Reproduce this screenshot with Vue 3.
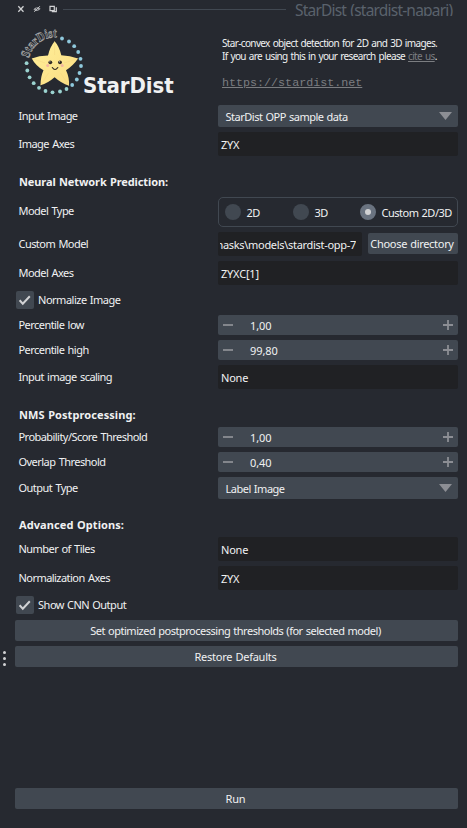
<script setup>
import { reactive } from 'vue'

const rows = reactive([
  { kind: 'combo', label: 'Input Image', value: 'StarDist OPP sample data' },
  { kind: 'text', label: 'Image Axes', value: 'ZYX' },
  { kind: 'heading', label: 'Neural Network Prediction:', tall: true },
  { kind: 'radio', label: 'Model Type', options: ['2D', '3D', 'Custom 2D/3D'], value: 'Custom 2D/3D' },
  { kind: 'file', label: 'Custom Model', value: 'masks\\models\\stardist-opp-7' },
  { kind: 'text', label: 'Model Axes', value: 'ZYXC[1]' },
  { kind: 'check', label: 'Normalize Image' },
  { kind: 'spin', label: 'Percentile low', value: '1,00' },
  { kind: 'spin', label: 'Percentile high', value: '99,80' },
  { kind: 'text', label: 'Input image scaling', value: 'None' },
  { kind: 'heading', label: 'NMS Postprocessing:' },
  { kind: 'spin', label: 'Probability/Score Threshold', value: '1,00' },
  { kind: 'spin', label: 'Overlap Threshold', value: '0,40' },
  { kind: 'combo', label: 'Output Type', value: 'Label Image' },
  { kind: 'heading', label: 'Advanced Options:' },
  { kind: 'text', label: 'Number of Tiles', value: 'None' },
  { kind: 'text', label: 'Normalization Axes', value: 'ZYX' },
  { kind: 'check', label: 'Show CNN Output' },
  { kind: 'button', label: 'Set optimized postprocessing thresholds (for selected model)' },
  { kind: 'button', label: 'Restore Defaults' },
])

const dots = [
  [62, 38.5], [69, 41.5], [74.2, 46.2], [78.2, 52], [80.5, 58.8], [81, 66], [79.5, 73],
  [76.8, 79.5], [72.2, 85], [66.5, 89], [60, 91.5], [52.5, 92.3], [45.5, 91], [39, 87.8],
  [33.7, 83.2], [29.6, 77.3], [27.3, 70.5], [26.6, 63.2],
]
</script>

<template>
  <div class="dock">
    <header class="titlebar">
      <svg class="tools" width="60" height="18" viewBox="0 0 60 18">
        <path d="M18.3 6.3l5.2 5.4M23.5 6.3l-5.2 5.4" stroke="#d1d2d4" stroke-width="1.3" fill="none" />
        <path d="M33.5 9.4c1.8-2.7 5.2-2.7 7-.6c-1.8 2.7-5.2 2.7-7 .6z" fill="#9d9fa3" />
        <circle cx="37" cy="9" r="1" fill="#3a3d44" />
        <path d="M34.3 11.8l5.6-5.6" stroke="#c5c6c8" stroke-width="1" />
        <path d="M50 6.300h4.300v4.300h-4.300zM51.800 11.700h4.500v-4.400" stroke="#d1d2d4" stroke-width="1.2" fill="none" />
      </svg>
      <span class="rule"></span>
      <span class="title">StarDist (stardist-napari)</span>
    </header>

    <section class="intro">
      <svg class="logo" width="66" height="72" viewBox="18 26 66 72">
        <defs>
          <path id="arc" d="M28.8 58.2A27.500 27.500 0 0 1 62 38" />
          <linearGradient id="skin" x1="0" y1="0" x2="1" y2="1">
            <stop offset="0" stop-color="#fff09a" />
            <stop offset="1" stop-color="#fbdc82" />
          </linearGradient>
        </defs>
        <text class="arc-text"><textPath href="#arc" textLength="37.500" lengthAdjust="spacingAndGlyphs">StarDist</textPath></text>
        <circle v-for="(d, i) in dots" :key="i" :cx="d[0]" :cy="d[1]" r="1.9" :fill="i < 9 ? '#8fc9dd' : '#9bd3d0'" />
        <path d="M54.6 41.3Q59 46 61.3 55.2Q70 55.3 78 58.6Q73.500 65.5 66 70.3Q69.500 77.500 69 85.700Q61 83 54.600 77.200Q48 83 40.500 85.300Q40.500 77 43.500 70.300Q35.500 65.500 31.800 58.400Q39 55.500 48 55.400Q50 47 54.600 41.300Z" fill="url(#skin)" />
        <path d="M54.600 41.300L54.600 55M78 58.600L64 63M69 85.700L60.500 73M40.500 85.300L48.500 73M31.800 58.400L45 63" stroke="#f3cf7c" stroke-width=".5" opacity=".6" />
        <circle cx="50.300" cy="62.300" r="1.900" fill="#2e2722" />
        <circle cx="60" cy="62.300" r="1.900" fill="#2e2722" />
        <circle cx="49.900" cy="61.700" r=".5" fill="#fff" />
        <circle cx="59.600" cy="61.700" r=".5" fill="#fff" />
        <circle cx="47.700" cy="65.500" r="1.500" fill="#f3b5a0" />
        <circle cx="62.200" cy="65.500" r="1.500" fill="#f3b5a0" />
        <path d="M52.300 67.500Q55 71.500 57.800 67.500" fill="none" stroke="#2e2722" stroke-width="1.100" stroke-linecap="round" />
      </svg>
      <h1>StarDist</h1>
      <div class="about">
        <p>Star-convex object detection for 2D and 3D images.</p>
        <p>If you are using this in your research please <a>cite us</a>.</p>
        <p class="site"><a>https://stardist.net</a></p>
      </div>
    </section>

    <main class="form">
      <div v-for="row in rows" :key="row.label" class="row" :class="[row.kind, { tall: row.tall }]">
        <button v-if="row.kind === 'button'" class="btn">{{ row.label }}</button>
        <h2 v-else-if="row.kind === 'heading'">{{ row.label }}</h2>
        <template v-else-if="row.kind === 'check'">
          <svg class="box" width="18" height="18" viewBox="0 0 18 18">
            <path d="M3.600 9.300l3.200 3.400l7-7.400" fill="none" stroke="#d1d2d4" stroke-width="2" />
          </svg>
          <span class="check-label">{{ row.label }}</span>
        </template>
        <template v-else>
          <label>{{ row.label }}</label>
          <div v-if="row.kind === 'combo'" class="field">
            <span>{{ row.value }}</span>
            <svg width="13" height="8" viewBox="0 0 13 8"><path d="M0 0h13L6.500 8z" fill="#8c8e94" /></svg>
          </div>
          <div v-else-if="row.kind === 'text'" class="field"><span>{{ row.value }}</span></div>
          <div v-else-if="row.kind === 'spin'" class="field">
            <svg width="10" height="10" viewBox="0 0 10 10"><path d="M0 5h10" stroke="#8c8e94" stroke-width="1.800" /></svg>
            <span>{{ row.value }}</span>
            <svg width="10" height="10" viewBox="0 0 10 10"><path d="M0 5h10M5 0v10" stroke="#8c8e94" stroke-width="1.800" /></svg>
          </div>
          <div v-else-if="row.kind === 'radio'" class="field">
            <div v-for="o in row.options" :key="o" class="option" :class="{ on: o === row.value }">
              <i></i><span>{{ o }}</span>
            </div>
          </div>
          <template v-else>
            <div class="field path"><div class="clip"><span>{{ row.value }}</span></div></div>
            <button class="btn choose">Choose directory</button>
          </template>
        </template>
      </div>
    </main>

    <footer><button class="btn">Run</button></footer>
    <div class="grip"><i></i><i></i><i></i></div>
  </div>
</template>

<style>
body {
  margin: 0;
  background: #262930;
}
</style>

<style scoped>
.dock {
  position: relative;
  display: flex;
  flex-direction: column;
  box-sizing: border-box;
  width: 467px;
  height: 828px;
  overflow: hidden;
  background: #262930;
  color: #f0f1f2;
  font: 11px 'Noto Sans', sans-serif;
  letter-spacing: -0.48px;
  word-spacing: 0.6px;
  white-space: nowrap;
}
.titlebar {
  display: flex;
  height: 16px;
  overflow: hidden;
}
.rule {
  width: 223px;
  height: 1px;
  margin: 9px 9px 0 3px;
  background: #414851;
}
.title {
  color: #5a626c;
  font-size: 15.5px;
  line-height: 21px;
  letter-spacing: -0.8px;
  word-spacing: 1px;
}
.intro {
  display: flex;
  height: 89px;
}
.logo {
  margin: 10px 0 0 18px;
}
.arc-text {
  font: bold 13px 'Liberation Serif', serif;
  letter-spacing: 0;
  fill: #262930;
  stroke: #a5a6a7;
  stroke-width: 0.7px;
}
h1 {
  width: 139px;
  margin: 55px 0 0 -1px;
  font: bold 22px/30px 'DejaVu Sans Condensed', 'DejaVu Sans', sans-serif;
  font-stretch: condensed;
  letter-spacing: -0.1px;
}
.about {
  padding-top: 21px;
  letter-spacing: -0.65px;
  word-spacing: 1px;
}
.about p {
  margin: 0;
  font-size: 10px;
  line-height: 13px;
}
.about a {
  color: #7b7d81;
  text-decoration: underline;
}
.about .site {
  margin-top: 14px;
  font-family: 'Liberation Mono', monospace;
  font-size: 11.7px;
  letter-spacing: 0;
}
.form {
  display: flex;
  flex-direction: column;
  gap: 5px;
  padding: 0 9px 0 15px;
}
.row {
  display: flex;
  height: 24px;
  line-height: 24px;
}
label {
  width: 199.5px;
  padding-left: 3.5px;
  letter-spacing: -0.55px;
  word-spacing: 1px;
}
.field {
  display: flex;
  box-sizing: border-box;
  width: 240px;
  border-radius: 2px;
  background: #414851;
}
.field span {
  padding-top: 1px;
}
.text .field,
.field.path {
  padding-left: 3px;
  background: #202124;
  letter-spacing: -0.2px;
}
.row.combo {
  height: 22px;
  line-height: 22px;
}
.combo .field {
  justify-content: space-between;
  padding: 0 6px 0 7.5px;
}
.combo svg {
  margin-top: 7px;
}
.row.spin {
  height: 20px;
  line-height: 20px;
}
.spin .field {
  padding: 0 5px;
  letter-spacing: -0.1px;
}
.spin .field span {
  flex: 1;
  padding-left: 17px;
}
.spin svg {
  margin-top: 5px;
}
.row.heading {
  height: 28px;
  align-items: flex-end;
}
.row.heading.tall {
  height: 31px;
}
h2 {
  margin: 0 0 -5px 4px;
  font-size: 11px;
  font-weight: bold;
  line-height: 24px;
  letter-spacing: 0.08px;
}
.tall h2 {
  margin-bottom: -2px;
  letter-spacing: -0.1px;
}
.row.radio {
  height: 30px;
  line-height: 28px;
}
.radio .field {
  padding-left: 6px;
  border: 1px solid #414851;
  border-radius: 5px;
  background: none;
}
.option {
  display: flex;
  flex: none;
  width: 68px;
}
.option:nth-child(2) {
  width: 67px;
}
.option i {
  flex: none;
  box-sizing: border-box;
  width: 16px;
  height: 16px;
  margin: 6px 5.5px 0 0;
  border-radius: 50%;
  background: #414851;
}
.option.on i {
  border: 5px solid #6a7380;
  background: #d1d2d4;
}
.field.path {
  width: 144px;
  padding: 0 6px 0 2px;
  letter-spacing: -0.3px;
}
.clip {
  display: flex;
  flex: 1;
  min-width: 0;
  justify-content: flex-end;
  overflow: hidden;
}
.btn {
  display: block;
  width: 100%;
  height: 21px;
  padding: 0 2px 0 0;
  border: 0;
  border-radius: 2px;
  background: #414851;
  color: inherit;
  font: inherit;
  line-height: 21px;
  letter-spacing: -0.48px;
  word-spacing: inherit;
  text-align: center;
}
.choose {
  width: 90px;
  margin: 1px 0 0 6px;
  letter-spacing: -0.3px;
}
.row.button {
  height: 21px;
}
.row.button:last-child .btn {
  letter-spacing: -0.25px;
}
.row.check {
  height: 20px;
  line-height: 20px;
}
.box {
  margin: 1px 0 0 1px;
  border-radius: 2px;
  background: #414851;
}
.check-label {
  padding: 0 0 0 4px;
}
footer {
  margin-top: auto;
  padding: 0 9px 19px 15px;
}
footer .btn {
  letter-spacing: -0.2px;
}
.grip {
  position: absolute;
  top: 650.5px;
  left: 2.5px;
  display: grid;
  gap: 3px;
}
.grip i {
  width: 3px;
  height: 3px;
  border-radius: 50%;
  background: #d1d2d4;
}
</style>
